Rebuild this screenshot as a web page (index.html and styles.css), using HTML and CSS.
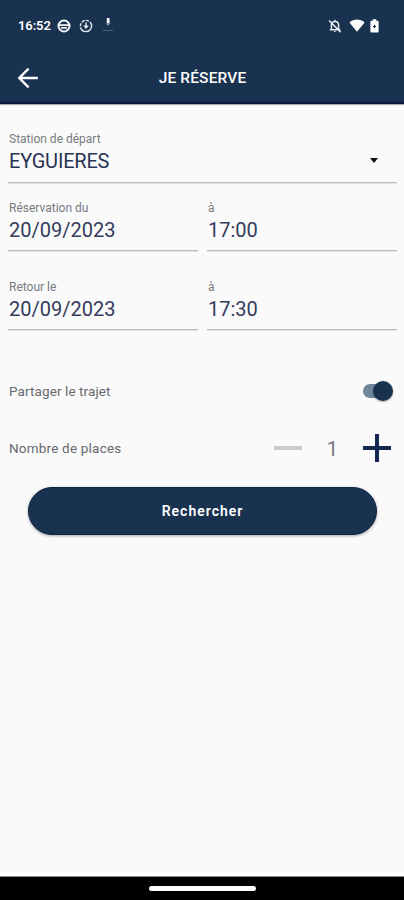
FILE: index.html
```html
<!DOCTYPE html>
<html lang="fr">
<head>
<meta charset="utf-8">
<title>Je réserve</title>
<link rel="stylesheet" href="styles.css">
</head>
<body>
<div class="screen">
  <header class="header">
    <div class="status">
      <span class="clock">16:52</span>
      <svg class="ic-globe" width="14" height="14" viewBox="0 0 14 14" fill="none" stroke="#f2f4f7"><circle cx="7" cy="7" r="5.500" stroke-width="2"/><path d="M2 6.200h10M4 8.800h6" stroke-width="1.800"/></svg>
      <svg class="ic-sync" width="14" height="14" viewBox="0 0 14 14" fill="none" stroke="#e6eaf0" stroke-width="1.4"><circle cx="7" cy="7" r="5.6" stroke-dasharray="15.6 1.2 3.2 1.2 3.2 1.2 3.2 1.2"/><path d="M7 3.600v4"/><path d="M4.200 6.600h5.600L7 9.900z" fill="#e6eaf0" stroke="none"/></svg>
      <svg class="ic-down" width="10" height="14" viewBox="0 0 10 14"><path d="M3.800 0h2.700v5.200H3.800z" fill="#fff"/><path d="M2.500 5.200h5.300L5.200 7.800z" fill="#8193a6"/><path d="M0 12.500h10" stroke="#445c75"/></svg>
      <span class="spacer"></span>
      <svg class="ic-bell" width="14" height="14" viewBox="0 0 14 14" fill="none" stroke="#e6eaf0" stroke-width="1.500"><path d="M3.400 10.700V6.200C3.400 3.900 4.900 2.500 7 2.500s3.600 1.400 3.600 3.700v4.500M1.800 10.800h10.500M7 .8v2M1 1.500l11.600 11.600"/><path d="M5.700 12h2.600L7 13.300z" fill="#e6eaf0" stroke="none"/></svg>
      <svg class="ic-wifi" width="16" height="13" viewBox="0 0 16 13"><path d="M.4 3.400C4.900-.4 11.100-.4 15.600 3.400L8 12.700z" fill="#fff"/></svg>
      <svg width="9" height="14" viewBox="0 0 9 14"><path d="M2.800.3h3.400v1.500h1.400q1 0 1 1v9.800q0 1-1 1H1.400q-1 0-1-1V2.800q0-1 1-1h1.400z" fill="#fff"/><path d="M4.500 5.800v3.400M3 7.500h3" stroke="#183250" stroke-width="1.200"/></svg>
    </div>
    <div class="toolbar">
      <svg class="back" width="22" height="22" viewBox="0 0 22 22" fill="none" stroke="#fff" stroke-width="2.400"><path d="M20.800 11H2.800M11.600 1.700L2.300 11l9.300 9.300"/></svg>
      <h1 class="title">JE RÉSERVE</h1>
    </div>
  </header>
  <main class="form">
    <div class="field station">
      <span class="label">Station de départ</span>
      <span class="value name">EYGUIERES</span>
      <span class="caret"></span>
    </div>
    <div class="row depart">
      <div class="field"><span class="label">Réservation du</span><span class="value">20/09/2023</span></div>
      <div class="field"><span class="label">à</span><span class="value">17:00</span></div>
    </div>
    <div class="row return">
      <div class="field"><span class="label">Retour le</span><span class="value">20/09/2023</span></div>
      <div class="field"><span class="label">à</span><span class="value">17:30</span></div>
    </div>
    <div class="option share">
      <span class="text">Partager le trajet</span>
      <span class="switch"><span class="thumb"></span></span>
    </div>
    <div class="option places">
      <span class="text seats">Nombre de places</span>
      <div class="stepper">
        <svg width="28" height="28" viewBox="0 0 28 28"><path d="M0 14h28" stroke="#ccc" stroke-width="4"/></svg>
        <span class="count">1</span>
        <svg width="28" height="28" viewBox="0 0 28 28"><path d="M0 14h28M14 0v28" stroke="#132750" stroke-width="4"/></svg>
      </div>
    </div>
    <button class="search">Rechercher</button>
  </main>
  <footer class="nav"><span class="handle"></span></footer>
</div>
</body>
</html>
```
FILE: styles.css
```css
* { box-sizing: border-box; }
body { margin: 0; font-family: Roboto, "Liberation Sans", sans-serif; background: #fafafa; }
.screen { width: 404px; height: 900px; display: flex; flex-direction: column; }
.header { height: 104px; flex: none; background: #183250; border-bottom: 2px solid #0c1742; box-shadow: 0 1px 1px #aaa; color: #fff; }
.status { height: 51px; display: flex; align-items: center; padding: 0 25px 0 18px; }
.clock { font-size: 13px; font-weight: 600; letter-spacing: -.1px; width: 39px; }
.ic-sync { margin-left: 8px; }
.ic-down { margin-left: 10px; margin-top: -2px; }
.spacer { flex: 1; }
.ic-wifi { margin: 0 5px 0 7px; }
.toolbar { height: 53px; display: grid; grid-template-columns: 50px 1fr 50px; align-items: center; padding-left: 1px; }
.back { margin-left: 16px; }
.title { margin: 0; padding-top: 1px; text-align: center; font-size: 15.500px; font-weight: 500; line-height: 20px; letter-spacing: .15px; }
.form { flex: 1; padding: 27px 7px 0 8px; }
.field { display: flex; flex-direction: column; border-bottom: 1px solid #bcbcbc; box-shadow: 0 1px 0 #e4e4e4; }
.station { height: 52px; position: relative; }
.label { font-size: 12px; line-height: 16px; color: #777a80; padding-left: 1px; }
.value { font-size: 20px; line-height: 24px; color: #343b5c; padding-left: 1px; margin-top: 2px; }
.name { letter-spacing: -.2px; color: #2b3254; }
.caret { position: absolute; right: 19px; top: 27px; border: 4.500px solid transparent; border-top: 5px solid #111; border-bottom: 0; }
.row { display: grid; grid-template-columns: 190px 190px; column-gap: 9px; }
.row .field { height: 51px; }
.depart { margin-top: 17px; }
.return { margin-top: 28px; }
.option { display: flex; align-items: center; justify-content: space-between; height: 30px; }
.text { font-size: 13.500px; color: #66696e; padding-left: 1px; letter-spacing: .1px; }
.seats { letter-spacing: .2px; }
.share { margin-top: 46px; }
.switch { width: 29px; height: 14px; border-radius: 7px; background: #70879b; margin-right: 5px; display: flex; justify-content: flex-end; align-items: center; }
.thumb { width: 20px; height: 20px; flex: none; border-radius: 50%; background: #183250; margin-right: -1px; box-shadow: 0 1px 2px #0005; }
.places { margin-top: 27px; }
.stepper { display: flex; align-items: center; margin-right: 6px; }
.count { width: 61px; text-align: center; font-size: 21px; padding-top: 1px; color: #777b83; }
.search { display: block; width: 349px; height: 48px; margin: 24px 0 0 20px; border: 1px solid #11244a; border-radius: 24px; background: #183250; color: #fff; font: 600 14px Roboto, "Liberation Sans", sans-serif; letter-spacing: 1px; box-shadow: 0 1px 3px #0005; }
.nav { height: 23px; flex: none; background: #000; box-shadow: 0 -1px 0 #888, 0 -4px 0 #fff; display: flex; justify-content: center; align-items: center; }
.handle { width: 107px; height: 5px; border-radius: 3px; background: #fff; }
```
